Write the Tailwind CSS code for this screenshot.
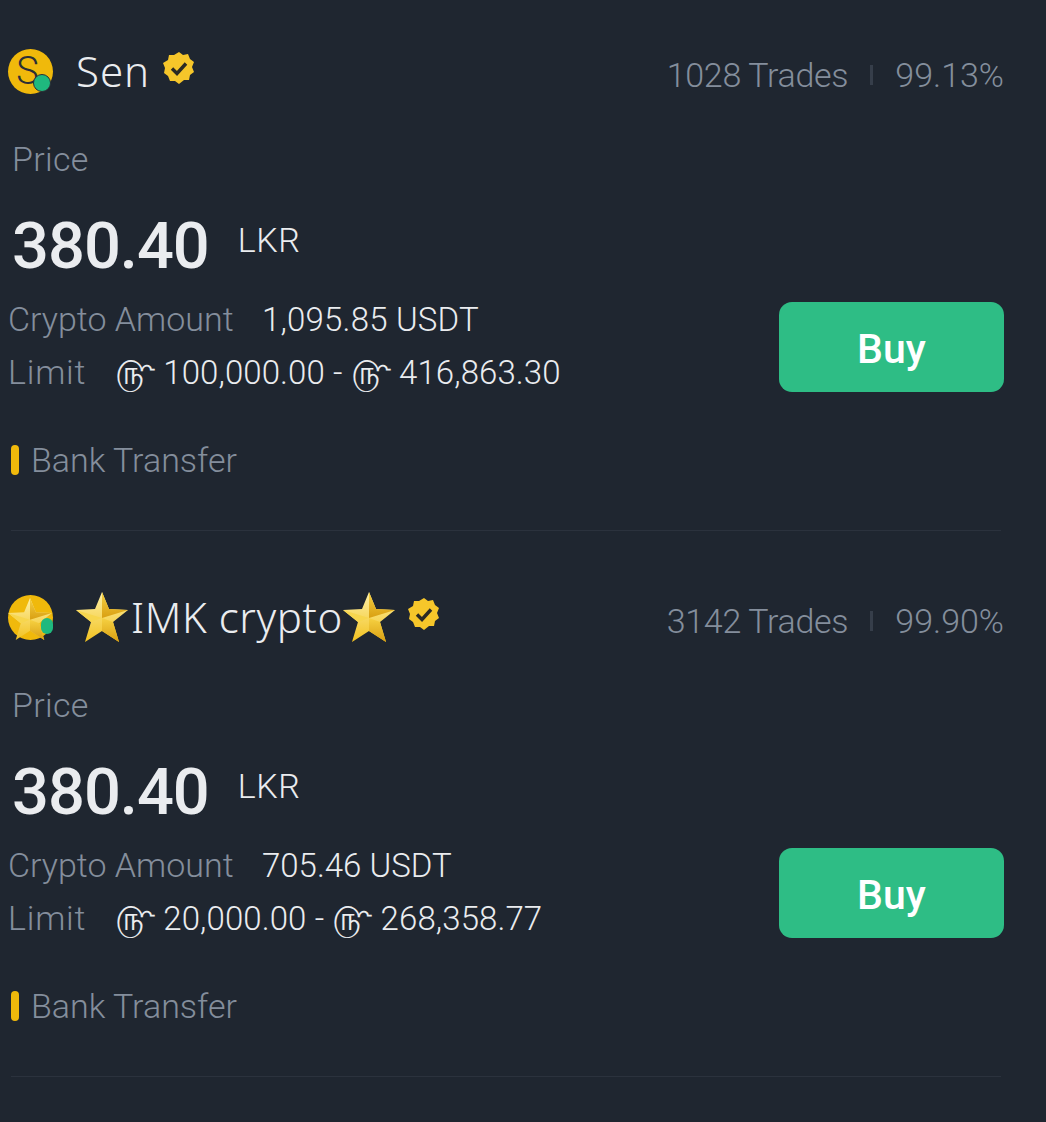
<!DOCTYPE html>
<html lang="en">

<head>
    <meta charset="utf-8">
    <script src="https://cdn.jsdelivr.net/npm/@tailwindcss/browser@4"></script>
</head>

<body class="bg-[#1f2630] font-['Roboto',sans-serif]">
    <svg width="0" height="0" class="absolute">
        <defs>
            <linearGradient id="starLight" x1="0" y1="0" x2="0" y2="1">
                <stop offset="0" stop-color="#fdf0a8" />
                <stop offset="1" stop-color="#f2c21f" />
            </linearGradient>
            <linearGradient id="starDark" x1="0" y1="0" x2="0" y2="1">
                <stop offset="0" stop-color="#f6d142" />
                <stop offset="1" stop-color="#d99f12" />
            </linearGradient>
            <symbol id="star" viewBox="0 0 52 50">
                <polygon points="26,0 33,17 52,18 37,30 43,50 26,39 9,50 15,30 0,18 19,17" fill="url(#starLight)" />
                <polygon points="26,0 33,17 52,18 26,26" fill="url(#starDark)" />
                <polygon points="26,26 37,30 43,50 26,39" fill="url(#starDark)" />
                <polygon points="26,26 15,30 0,18" fill="#f7d64e" />
            </symbol>
            <symbol id="badge" viewBox="0 0 32 32">
                <polygon fill="#f6c62a" points="16,0 20,3 25,2 27,7 31,10 29,15 31,20 27,23 26,28 21,28 16,32 12,29 7,29 5,24 1,21 2,16 0,11 5,8 6,3 11,3" />
                <path d="M9 16.5l5 5 9-10" fill="none" stroke="#2b2a24" stroke-width="3.4" />
            </symbol>
        </defs>
    </svg>

    <!-- First ad -->
    <div class="h-[546px] pl-[8px] pr-[42px] flex flex-col">
        <div class="flex items-center justify-between h-[50px] mt-[46px]">
            <div class="flex items-center">
                <div class="relative w-[45px] h-[45px] rounded-full bg-[#f0b90b] flex items-center justify-center text-[38px] font-light pr-[6px] text-[#2b2f36] leading-none">
                    S
                    <span class="absolute left-[25px] top-[25px] w-[18px] h-[18px] rounded-full bg-[#1fb97e] border border-[#2b2f36]"></span>
                </div>
                <span class="ml-[23px] text-[42px] leading-none tracking-[1px] text-[#eaecef] font-['Noto_Sans',sans-serif] font-light">Sen</span>
                <svg class="ml-[13px] -mt-[6px] w-[32px] h-[32px]"><use href="#badge" /></svg>
            </div>
            <div class="flex items-center text-[34px] font-light text-[#848e9c] mt-[8px]">
                <span class="tracking-[-0.3px]">1028 Trades</span>
                <span class="mx-[22px] w-[3px] h-[20px] bg-[#363e4a]"></span>
                <span>99.13%</span>
            </div>
        </div>
        <div class="ml-[4px] mt-[43px] text-[34px] leading-[40px] tracking-[0.3px] font-light text-[#848e9c]">Price</div>
        <div class="ml-[4px] mt-[29px] flex items-start">
            <span class="text-[65px] leading-[76px] font-medium text-[#eaecef] tracking-[-1px]">380.40</span>
            <span class="ml-[29px] mt-[12px] text-[34px] leading-[40px] tracking-[0.5px] font-light text-[#eaecef]">LKR</span>
        </div>
        <div class="flex items-center justify-between mt-[9px]">
            <div class="text-[33px] leading-[53px] font-light">
                <div class="flex">
                    <span class="w-[254px] text-[34px] text-[#848e9c]">Crypto Amount</span>
                    <span class="text-[#eaecef] tracking-[0.2px]">1,095.85 USDT</span>
                </div>
                <div class="flex items-center text-[#eaecef]">
                    <span class="w-[107px] text-[34px] tracking-[0.8px] text-[#848e9c]">Limit</span>
                    <span class="tracking-[0.1px]">௹ 100,000.00 - ௹ 416,863.30</span>
                </div>
            </div>
            <button class="mt-[2px] w-[225px] h-[90px] rounded-[13px] bg-[#2ebd85] text-white text-[41px] font-medium pt-[6px]">Buy</button>
        </div>
        <div class="flex items-center mt-[41px] ml-[3px]">
            <span class="w-[8px] h-[30px] rounded-full bg-[#f0b90b]"></span>
            <span class="ml-[12px] text-[34px] leading-[40px] font-light text-[#848e9c]">Bank Transfer</span>
        </div>
        <div class="mt-[50px] ml-[3px] mr-[3px] border-b border-[#2b323d]"></div>
    </div>

    <!-- Second ad -->
    <div class="h-[546px] pl-[8px] pr-[42px] flex flex-col">
        <div class="flex items-center justify-between h-[50px] mt-[46px]">
            <div class="flex items-center">
                <div class="relative w-[45px] h-[45px] rounded-full bg-[#f0b90b]">
                    <svg class="absolute left-0 top-[3px] w-[44px] h-[42px]"><use href="#star" /></svg>
                    <span class="absolute left-[33px] top-[23px] w-[12px] h-[16px] rounded-full bg-[#1fb97e]"></span>
                </div>
                <svg class="ml-[23px] w-[52px] h-[50px]"><use href="#star" /></svg>
                <span class="ml-[3px] text-[42px] leading-none tracking-[0.6px] text-[#eaecef] font-['Noto_Sans',sans-serif] font-light">IMK crypto</span>
                <svg class="w-[52px] h-[50px]"><use href="#star" /></svg>
                <svg class="ml-[13px] -mt-[6px] w-[32px] h-[32px]"><use href="#badge" /></svg>
            </div>
            <div class="flex items-center text-[34px] font-light text-[#848e9c] mt-[8px]">
                <span class="tracking-[-0.3px]">3142 Trades</span>
                <span class="mx-[22px] w-[3px] h-[20px] bg-[#363e4a]"></span>
                <span>99.90%</span>
            </div>
        </div>
        <div class="ml-[4px] mt-[43px] text-[34px] leading-[40px] tracking-[0.3px] font-light text-[#848e9c]">Price</div>
        <div class="ml-[4px] mt-[29px] flex items-start">
            <span class="text-[65px] leading-[76px] font-medium text-[#eaecef] tracking-[-1px]">380.40</span>
            <span class="ml-[29px] mt-[12px] text-[34px] leading-[40px] tracking-[0.5px] font-light text-[#eaecef]">LKR</span>
        </div>
        <div class="flex items-center justify-between mt-[9px]">
            <div class="text-[33px] leading-[53px] font-light">
                <div class="flex">
                    <span class="w-[254px] text-[34px] text-[#848e9c]">Crypto Amount</span>
                    <span class="text-[#eaecef]">705.46 USDT</span>
                </div>
                <div class="flex items-center text-[#eaecef]">
                    <span class="w-[107px] text-[34px] tracking-[0.8px] text-[#848e9c]">Limit</span>
                    <span class="tracking-[0.1px]">௹ 20,000.00 - ௹ 268,358.77</span>
                </div>
            </div>
            <button class="mt-[2px] w-[225px] h-[90px] rounded-[13px] bg-[#2ebd85] text-white text-[41px] font-medium pt-[6px]">Buy</button>
        </div>
        <div class="flex items-center mt-[41px] ml-[3px]">
            <span class="w-[8px] h-[30px] rounded-full bg-[#f0b90b]"></span>
            <span class="ml-[12px] text-[34px] leading-[40px] font-light text-[#848e9c]">Bank Transfer</span>
        </div>
        <div class="mt-[50px] ml-[3px] mr-[3px] border-b border-[#2b323d]"></div>
    </div>
</body>

</html>
